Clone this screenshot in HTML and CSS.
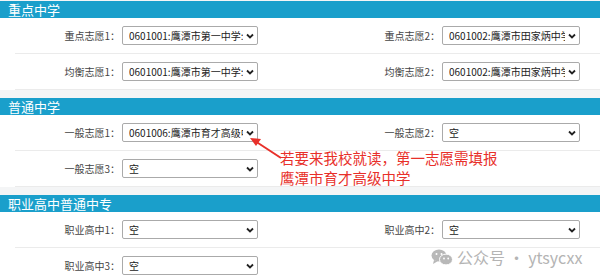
FILE: index.html
```html
<!DOCTYPE html>
<html lang="zh-CN">
<head>
<meta charset="UTF-8" />
<meta name="viewport" content="width=device-width, initial-scale=1" />
<title>志愿填报</title>
<link rel="stylesheet" href="styles.css">
</head>
<body>

<div class="page">

  <section class="group">
    <h2 class="group-title">重点中学</h2>
    <div class="row">
      <label>重点志愿1：</label>
      <span class="pick"><select><option>0601001:鹰潭市第一中学:高中部</option></select><svg class="chev" viewBox="0 0 8 6"><path d="M1 1.5 L4 4.5 L7 1.5" /></svg></span>
      <label>重点志愿2：</label>
      <span class="pick"><select><option>0601002:鹰潭市田家炳中学:高中部</option></select><svg class="chev" viewBox="0 0 8 6"><path d="M1 1.5 L4 4.5 L7 1.5" /></svg></span>
    </div>
    <div class="row">
      <label>均衡志愿1：</label>
      <span class="pick"><select><option>0601001:鹰潭市第一中学:均衡生</option></select><svg class="chev" viewBox="0 0 8 6"><path d="M1 1.5 L4 4.5 L7 1.5" /></svg></span>
      <label>均衡志愿2：</label>
      <span class="pick"><select><option>0601002:鹰潭市田家炳中学:均衡生</option></select><svg class="chev" viewBox="0 0 8 6"><path d="M1 1.5 L4 4.5 L7 1.5" /></svg></span>
    </div>
  </section>

  <section class="group">
    <h2 class="group-title">普通中学</h2>
    <div class="row">
      <label>一般志愿1：</label>
      <span class="pick"><select><option>0601006:鹰潭市育才高级中学</option></select><svg class="chev" viewBox="0 0 8 6"><path d="M1 1.5 L4 4.5 L7 1.5" /></svg></span>
      <label>一般志愿2：</label>
      <span class="pick"><select><option>空</option></select><svg class="chev" viewBox="0 0 8 6"><path d="M1 1.5 L4 4.5 L7 1.5" /></svg></span>
    </div>
    <div class="row">
      <label>一般志愿3：</label>
      <span class="pick"><select><option>空</option></select><svg class="chev" viewBox="0 0 8 6"><path d="M1 1.5 L4 4.5 L7 1.5" /></svg></span>
    </div>
  </section>

  <section class="group">
    <h2 class="group-title">职业高中普通中专</h2>
    <div class="row">
      <label>职业高中1：</label>
      <span class="pick"><select><option>空</option></select><svg class="chev" viewBox="0 0 8 6"><path d="M1 1.5 L4 4.5 L7 1.5" /></svg></span>
      <label>职业高中2：</label>
      <span class="pick"><select><option>空</option></select><svg class="chev" viewBox="0 0 8 6"><path d="M1 1.5 L4 4.5 L7 1.5" /></svg></span>
    </div>
    <div class="row">
      <label>职业高中3：</label>
      <span class="pick"><select><option>空</option></select><svg class="chev" viewBox="0 0 8 6"><path d="M1 1.5 L4 4.5 L7 1.5" /></svg></span>
    </div>
  </section>

  <!-- red annotation drawn over the form -->
  <svg class="arrow" width="40" height="30" viewBox="0 0 40 30">
    <path d="M33 25 L7 8" stroke="#e8302a" stroke-width="2" fill="none" />
    <polygon points="2,5 13,6 8,13" fill="#e8302a" />
  </svg>
  <div class="note">
    <p>若要来我校就读，第一志愿需填报</p>
    <p>鹰潭市育才高级中学</p>
  </div>

  <div class="watermark">
    <svg class="wx" width="22" height="17" viewBox="0 0 22 17">
      <ellipse cx="8" cy="6.5" rx="7.5" ry="6" fill="#b8b8b8" />
      <polygon points="3,11 2,15 7,12" fill="#b8b8b8" />
      <ellipse cx="15" cy="10.5" rx="6.5" ry="5.4" fill="#b8b8b8" stroke="#fff" stroke-width="1" />
      <circle cx="5.5" cy="5" r="1" fill="#fff" />
      <circle cx="10.5" cy="5" r="1" fill="#fff" />
      <circle cx="13" cy="9.5" r="0.9" fill="#fff" />
      <circle cx="17.2" cy="9.5" r="0.9" fill="#fff" />
    </svg>
    <span>公众号 · ytsycxx</span>
  </div>

</div>

</body>
</html>
```

FILE: styles.css
```css
body {
  margin: 0;
  background: #f4f5f6;
  font-family: "Noto Sans CJK SC", "Noto Sans", sans-serif;
}
.page {
  position: relative;
  width: 600px;
  height: 279px;
  padding-top: 1px;
  overflow: hidden;
}
.group {
  background: white;
  margin-bottom: 8px;
}
.group-title {
  margin: 0;
  height: 17px;
  line-height: 17px;
  padding-left: 8px;
  font-size: 13px;
  font-weight: normal;
  color: white;
  background: #1a9fcb;
}
.row {
  display: grid;
  grid-template-columns: 107px 136px 1fr 138px;
  align-items: center;
  height: 35px;
  margin-left: 15px;
  padding-right: 20px;
  border-bottom: 1px solid #ebebeb;
}
.row label {
  text-align: right;
  font-size: 10px;
  color: #444;
  padding-right: 2px;
}
.pick {
  position: relative;
  display: block;
  height: 19px;
}
.pick select {
  -webkit-appearance: none;
  appearance: none;
  display: block;
  width: 100%;
  height: 19px;
  margin: 0;
  padding: 0 14px 0 6px;
  font-family: "Noto Sans CJK SC", "Noto Sans", sans-serif;
  font-size: 10px;
  color: #222;
  background: white;
  border: 1px solid #aaa;
  border-radius: 2px;
}
.chev {
  position: absolute;
  right: 4px;
  top: 7px;
  width: 8px;
  height: 6px;
  pointer-events: none;
}
.chev path {
  fill: none;
  stroke: #222;
  stroke-width: 1.8;
}
.arrow {
  position: absolute;
  left: 248px;
  top: 133px;
}
.note {
  position: absolute;
  left: 280px;
  top: 148px;
  color: #e8302a;
  font-size: 14.5px;
  line-height: 20px;
}
.note p {
  margin: 0;
}
.watermark {
  position: absolute;
  left: 431px;
  top: 245px;
  display: flex;
  align-items: center;
  gap: 4px;
  color: #b4b4b4;
  font-size: 16px;
}
.wx {
  display: block;
}
```
